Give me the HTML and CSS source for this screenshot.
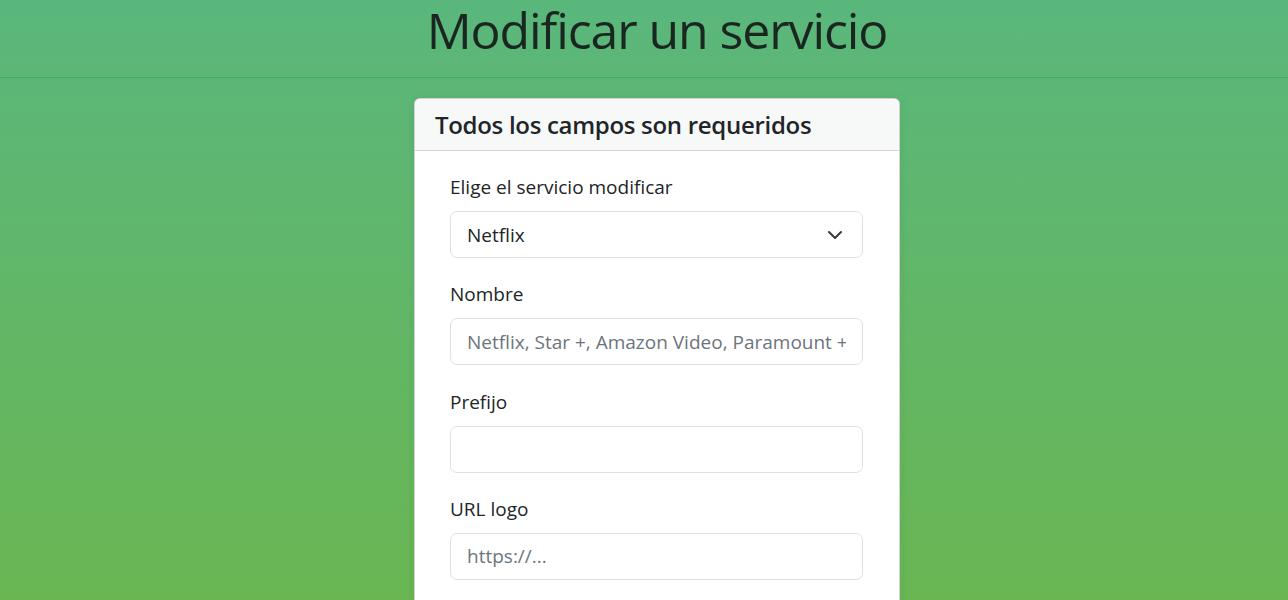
FILE: index.html
```html
<!DOCTYPE html>
<html lang="es">
<head>
<meta charset="utf-8">
<title>Modificar un servicio</title>
<link rel="stylesheet" href="styles.css">
</head>
<body>
<header class="page-header">
  <h1 class="page-title">Modificar un servicio</h1>
</header>
<main class="page-main">
  <section class="card">
    <div class="card-header">
      <h4 class="card-title">Todos los campos son requeridos</h4>
    </div>
    <form class="card-body">
      <div class="field">
        <label class="field-label" for="servicio">Elige el servicio modificar</label>
        <div class="select-wrap">
          <select id="servicio" class="field-input field-select">
            <option>Netflix</option>
          </select>
          <svg class="chevron" viewBox="0 0 16 16" width="16" height="16" aria-hidden="true">
            <path d="M2 5l6 6 6-6" fill="none" stroke="#343a40" stroke-width="2" stroke-linecap="round" stroke-linejoin="round"/>
          </svg>
        </div>
      </div>
      <div class="field">
        <label class="field-label" for="nombre">Nombre</label>
        <input id="nombre" class="field-input" type="text" placeholder="Netflix, Star +, Amazon Video, Paramount +">
      </div>
      <div class="field">
        <label class="field-label" for="prefijo">Prefijo</label>
        <input id="prefijo" class="field-input" type="text">
      </div>
      <div class="field">
        <label class="field-label" for="logo">URL logo</label>
        <input id="logo" class="field-input" type="text" placeholder="https://...">
      </div>
      <div class="field">
        <label class="field-label" for="color">Color</label>
        <input id="color" class="field-input" type="text">
      </div>
    </form>
  </section>
</main>
</body>
</html>
```
FILE: styles.css
```css
* { box-sizing: border-box; }
html, body { margin: 0; padding: 0; }
body {
  font-family: "Open Sans", "Noto Sans", "Liberation Sans", sans-serif;
  color: #212529;
  background: linear-gradient(180deg, #5ab77c 0px, #69b653 600px, #6fb54a 900px);
  min-height: 100vh;
}
.page-header {
  height: 78px;
  border-bottom: 1px solid #3fab66;
  padding-left: 26px;
  display: flex;
  justify-content: center;
}
.page-title {
  margin: 0;
  font-size: 50px;
  font-weight: 400;
  line-height: 60px;
  color: #1a2620;
  letter-spacing: -1.1px;
}
.page-main {
  display: flex;
  justify-content: center;
  padding: 20px 0 0 26px;
}
.card {
  width: 486px;
  background: #fff;
  border: 1px solid rgba(0,0,0,.175);
  border-radius: 6px;
  box-shadow: 0 0 12px rgba(0,0,0,.06);
  overflow: hidden;
}
.card-header {
  background: #f7f8f8;
  border-bottom: 1px solid #d3d5d6;
  height: 52px;
  padding: 0 20px;
  display: flex;
  align-items: center;
}
.card-title {
  margin: 0;
  font-size: 24px;
  font-weight: 600;
  color: #212529;
  letter-spacing: -0.3px;
}
.card-body {
  padding: 23px 36px 20px 35px;
  display: flex;
  flex-direction: column;
  gap: 23.3px;
}
.field { display: flex; flex-direction: column; }
.field-label {
  font-size: 19px;
  line-height: 27px;
  margin-bottom: 10px;
  color: #212529;
}
.select-wrap { position: relative; }
.field-input {
  width: 100%;
  height: 47px;
  border: 1px solid #dee2e6;
  border-radius: 7px;
  padding: 0 16px;
  font-family: inherit;
  font-size: 19px;
  color: #212529;
  background: #fff;
  outline: none;
}
.field-input::placeholder { color: #6c757d; }
.field-select { appearance: none; -webkit-appearance: none; }
.chevron {
  position: absolute;
  right: 20px;
  top: 16px;
  pointer-events: none;
}
```
